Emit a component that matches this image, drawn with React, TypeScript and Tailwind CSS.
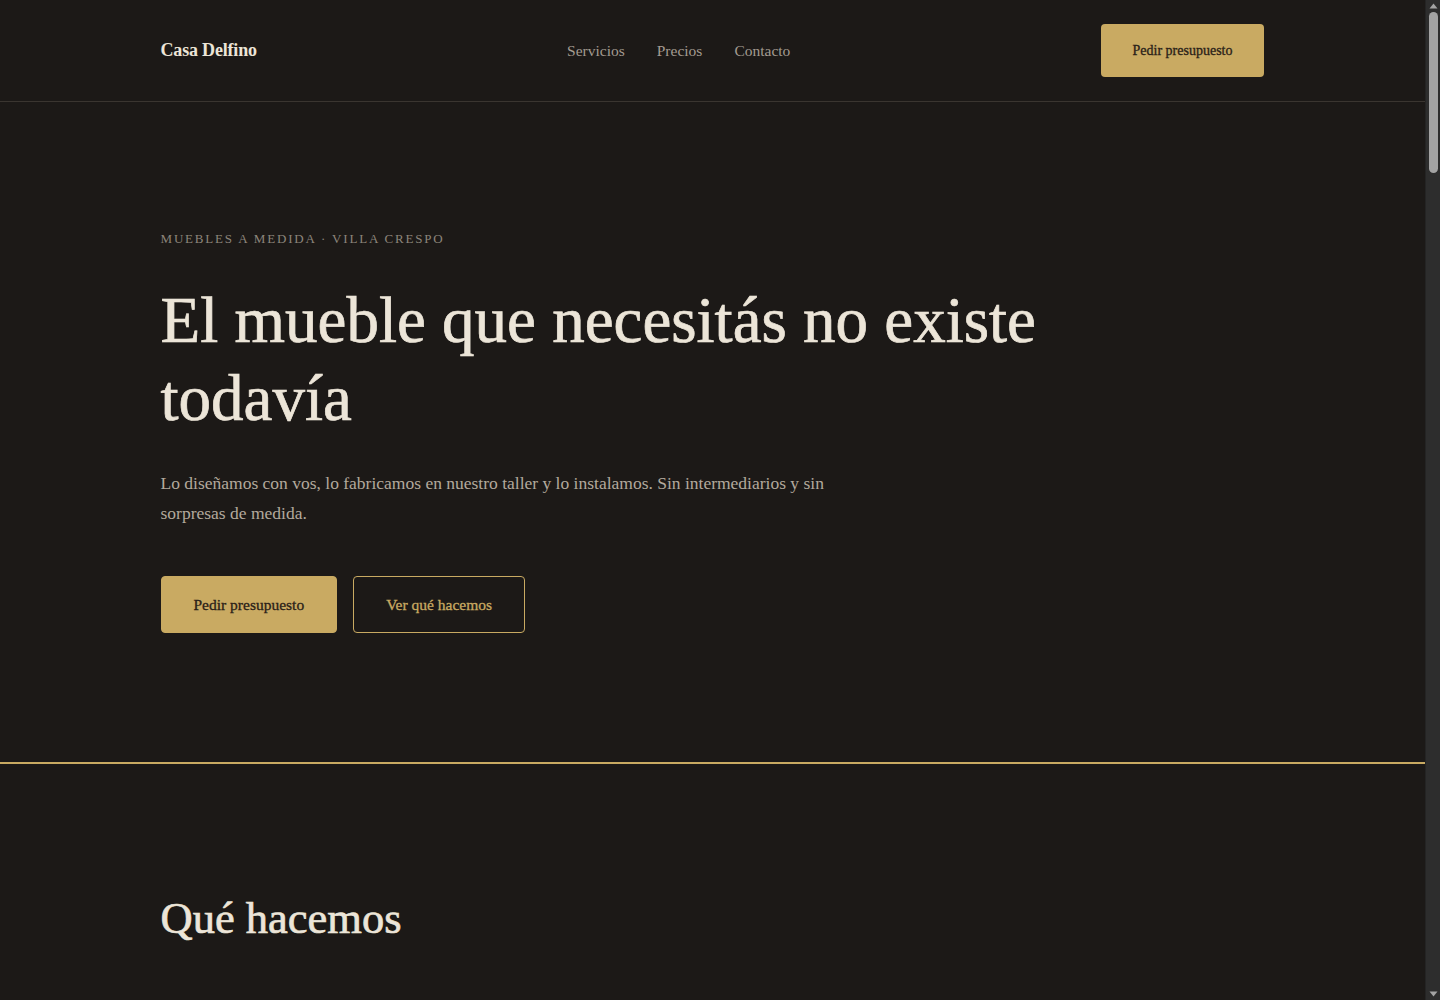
import React from "react";

const serif = "font-['Liberation_Serif','Times_New_Roman',serif]";
const display = "[-webkit-text-stroke:0.7px_#ece5d8]";

const services = [
  { n: "01", t: "Cocinas", d: "Bajo mesadas, alacenas y islas pensadas para tu espacio y tu forma de cocinar." },
  { n: "02", t: "Placares y vestidores", d: "Interiores a medida con cajoneras, barrales y estantes donde realmente los usás." },
  { n: "03", t: "Bibliotecas", d: "Estanterías de piso a techo, con o sin puertas, en madera maciza o enchapada." },
  { n: "04", t: "Muebles de living", d: "Racks, aparadores y mesas bajas que combinan con lo que ya tenés." },
  { n: "05", t: "Espacios de trabajo", d: "Escritorios y estaciones de trabajo para casas, estudios y oficinas chicas." },
  { n: "06", t: "Restauración", d: "Recuperamos muebles de familia: lijado, encolado, lustre y tapizado." },
];

const steps = [
  { n: "1", t: "Visita", d: "Vamos a tu casa, medimos y escuchamos qué necesitás." },
  { n: "2", t: "Diseño", d: "Te mostramos planos y renders con materiales y terminaciones." },
  { n: "3", t: "Fabricación", d: "Lo hacemos en nuestro taller de Villa Crespo, sin tercerizar." },
  { n: "4", t: "Instalación", d: "Lo llevamos, lo instalamos y dejamos todo limpio." },
];

const prices = [
  { t: "Mueble simple", p: "desde $450.000", d: "Estantes, mesas de luz, racks y piezas sueltas.", f: ["Visita y medición", "Un diseño con dos revisiones", "Entrega en 3 semanas"] },
  { t: "Ambiente completo", p: "desde $1.800.000", d: "Cocinas, placares o bibliotecas de pared completa.", f: ["Visita y medición", "Renders del ambiente", "Instalación incluida", "Garantía de 2 años"] },
  { t: "Proyecto a medida", p: "a consultar", d: "Locales, oficinas y obras con varios ambientes.", f: ["Relevamiento técnico", "Coordinación con la obra", "Cronograma por etapas"] },
];

const faqs = [
  { q: "¿Cuánto tarda un mueble?", a: "Entre tres y seis semanas desde que aprobás el diseño, según el tamaño y los materiales." },
  { q: "¿Trabajan fuera de CABA?", a: "Sí, hacemos instalaciones en todo el AMBA. Para otras zonas, consultanos." },
  { q: "¿Qué maderas usan?", a: "Paraíso, guatambú, kiri y petiribí macizos, además de placas enchapadas y melaminas de primera marca." },
  { q: "¿Cómo se paga?", a: "Una seña del 50% al aprobar el diseño y el resto contra entrega e instalación." },
];

function Scrollbar() {
  return (
    <div className="fixed right-0 top-0 z-10 flex h-screen w-[15px] flex-col items-center border-l border-[#242424] bg-[#2d2d2d]">
      <svg width="9" height="6" viewBox="0 0 9 6" className="mt-[3px]">
        <path d="M4.5 0.5 L8.5 5.5 L0.5 5.5 Z" fill="#a3a3a3" />
      </svg>
      <div className="mt-[3px] h-[161px] w-[9px] rounded-full bg-[#a3a3a3]" />
      <div className="flex-1" />
      <svg width="9" height="6" viewBox="0 0 9 6" className="mb-[3px]">
        <path d="M0.5 0.5 L8.5 0.5 L4.5 5.5 Z" fill="#a3a3a3" />
      </svg>
    </div>
  );
}

export default function App() {
  return (
    <div className={`min-h-screen bg-[#1c1917] text-[#ece5d8] ${serif}`}>
      <Scrollbar />
      <div className="mr-[15px]">
        {/* Header */}
        <header className="border-b border-[#3a3530]">
          <div className="mx-auto flex h-[101px] max-w-[1200px] items-center justify-between px-12">
            <a className="text-[18px] font-bold tracking-[-0.01em] text-[#ece5d8]">Casa Delfino</a>
            <nav className="flex items-center gap-8 text-[15.5px] text-[#a39b91]">
              <a>Servicios</a>
              <a>Precios</a>
              <a>Contacto</a>
            </nav>
            <a className="rounded-[4px] bg-[#c9aa62] px-8 py-4 text-[14px] leading-[21px] text-[#2a2118] [-webkit-text-stroke:0.3px_#2a2118]">
              Pedir presupuesto
            </a>
          </div>
        </header>

        {/* Hero */}
        <section>
          <div className="mx-auto max-w-[1200px] px-12 pb-[129px] pt-[127px]">
            <p className="text-[13px] uppercase leading-5 tracking-[0.14em] text-[#8c857b]">
              Muebles a medida · Villa Crespo
            </p>
            <h1 className={`mt-[32px] max-w-[920px] text-[65px] font-normal leading-[78px] text-[#ece5d8] ${display}`}>
              El mueble que necesitás no existe todavía
            </h1>
            <p className="mt-[31px] max-w-[690px] text-[17.5px] leading-[30px] text-[#b3a99d]">
              Lo diseñamos con vos, lo fabricamos en nuestro taller y lo instalamos. Sin intermediarios y sin sorpresas de medida.
            </p>
            <div className="mt-[48px] flex gap-4">
              <a className="rounded-[4px] border border-[#c9aa62] bg-[#c9aa62] px-8 py-4 text-[15.5px] leading-[23px] text-[#2a2118] [-webkit-text-stroke:0.3px_#2a2118]">
                Pedir presupuesto
              </a>
              <a className="rounded-[4px] border border-[#c9aa62] px-8 py-4 text-[15.5px] leading-[23px] text-[#c9aa62] [-webkit-text-stroke:0.3px_#c9aa62]">
                Ver qué hacemos
              </a>
            </div>
          </div>
        </section>

        {/* Qué hacemos */}
        <section className="border-t-2 border-[#c9aa62]">
          <div className="mx-auto max-w-[1200px] px-12 py-32">
            <h2 className={`text-[44.5px] font-normal leading-[1.2] text-[#ece5d8] ${display}`}>Qué hacemos</h2>
            <p className="mt-16 max-w-[620px] text-[17.5px] leading-[30px] text-[#b3a99d]">
              Cada pieza sale de nuestro taller. Trabajamos con madera maciza, placas enchapadas y herrajes de primera.
            </p>
            <div className="mt-16 grid grid-cols-3 gap-6">
              {services.map((s) => (
                <div key={s.n} className="rounded-[4px] border border-[#3a3530] p-8">
                  <span className="text-[13px] tracking-[0.13em] text-[#c9aa62]">{s.n}</span>
                  <h3 className="mt-4 text-[24px] text-[#ece5d8]">{s.t}</h3>
                  <p className="mt-3 text-[16px] leading-[27px] text-[#b3a99d]">{s.d}</p>
                </div>
              ))}
            </div>
          </div>
        </section>

        {/* Cómo trabajamos */}
        <section className="border-t border-[#3a3530]">
          <div className="mx-auto max-w-[1200px] px-12 py-32">
            <p className="text-[13px] uppercase tracking-[0.13em] text-[#8c857b]">El proceso</p>
            <h2 className={`mt-6 text-[44.5px] leading-[1.2] ${display}`}>Cómo trabajamos</h2>
            <div className="mt-16 grid grid-cols-4 gap-10">
              {steps.map((s) => (
                <div key={s.n} className="border-t border-[#c9aa62] pt-6">
                  <span className="text-[40px] text-[#c9aa62]">{s.n}</span>
                  <h3 className="mt-2 text-[22px]">{s.t}</h3>
                  <p className="mt-3 text-[16px] leading-[27px] text-[#b3a99d]">{s.d}</p>
                </div>
              ))}
            </div>
          </div>
        </section>

        {/* Trabajos */}
        <section className="border-t border-[#3a3530]">
          <div className="mx-auto max-w-[1200px] px-12 py-32">
            <h2 className={`text-[44.5px] leading-[1.2] ${display}`}>Trabajos recientes</h2>
            <div className="mt-16 grid grid-cols-2 gap-6">
              {["Cocina en paraíso · Palermo", "Biblioteca de pared · Almagro", "Vestidor · Caballito", "Rack y aparador · Villa Crespo"].map((t) => (
                <div key={t}>
                  <div className="h-[320px] rounded-[4px] bg-gradient-to-br from-[#3a3128] to-[#26211c]" />
                  <p className="mt-4 text-[17px] text-[#b3a99d]">{t}</p>
                </div>
              ))}
            </div>
          </div>
        </section>

        {/* Precios */}
        <section className="border-t border-[#3a3530]">
          <div className="mx-auto max-w-[1200px] px-12 py-32">
            <h2 className={`text-[44.5px] leading-[1.2] ${display}`}>Precios</h2>
            <p className="mt-6 max-w-[620px] text-[17.5px] leading-[30px] text-[#b3a99d]">
              Valores orientativos. El presupuesto final depende de medidas, materiales y terminaciones.
            </p>
            <div className="mt-16 grid grid-cols-3 gap-6">
              {prices.map((p, i) => (
                <div key={p.t} className={`rounded-[4px] border p-10 ${i === 1 ? "border-[#c9aa62]" : "border-[#3a3530]"}`}>
                  <h3 className="text-[24px]">{p.t}</h3>
                  <p className="mt-4 text-[30px] text-[#c9aa62]">{p.p}</p>
                  <p className="mt-4 text-[16px] leading-[27px] text-[#b3a99d]">{p.d}</p>
                  <ul className="mt-6 space-y-3 text-[16px] text-[#b3a99d]">
                    {p.f.map((f) => (
                      <li key={f} className="border-t border-[#3a3530] pt-3">{f}</li>
                    ))}
                  </ul>
                </div>
              ))}
            </div>
          </div>
        </section>

        {/* Testimonios */}
        <section className="border-t border-[#3a3530]">
          <div className="mx-auto max-w-[1200px] px-12 py-32">
            <h2 className={`text-[44.5px] leading-[1.2] ${display}`}>Lo que dicen</h2>
            <div className="mt-16 grid grid-cols-2 gap-10">
              <blockquote className="border-l-2 border-[#c9aa62] pl-8 text-[22px] leading-[34px]">
                “Nos hicieron la cocina entera en cinco semanas. Quedó exactamente como en los renders.”
                <footer className="mt-4 text-[15px] text-[#8c857b]">Laura M. · Palermo</footer>
              </blockquote>
              <blockquote className="border-l-2 border-[#c9aa62] pl-8 text-[22px] leading-[34px]">
                “Restauraron el aparador de mi abuela. Parece nuevo pero sigue siendo el mismo mueble.”
                <footer className="mt-4 text-[15px] text-[#8c857b]">Jorge R. · Caballito</footer>
              </blockquote>
            </div>
          </div>
        </section>

        {/* FAQ */}
        <section className="border-t border-[#3a3530]">
          <div className="mx-auto max-w-[1200px] px-12 py-32">
            <h2 className={`text-[44.5px] leading-[1.2] ${display}`}>Preguntas frecuentes</h2>
            <div className="mt-12 max-w-[800px]">
              {faqs.map((f) => (
                <div key={f.q} className="border-b border-[#3a3530] py-6">
                  <h3 className="text-[20px]">{f.q}</h3>
                  <p className="mt-2 text-[16px] leading-[27px] text-[#b3a99d]">{f.a}</p>
                </div>
              ))}
            </div>
          </div>
        </section>

        {/* Contacto */}
        <section className="border-t-2 border-[#c9aa62]">
          <div className="mx-auto grid max-w-[1200px] grid-cols-2 gap-16 px-12 py-32">
            <div>
              <h2 className={`text-[44.5px] leading-[1.2] ${display}`}>Contacto</h2>
              <p className="mt-6 text-[17.5px] leading-[30px] text-[#b3a99d]">
                Contanos qué necesitás y te respondemos en 48 horas hábiles.
              </p>
              <div className="mt-10 space-y-2 text-[16px] text-[#b3a99d]">
                <p>Av. Corrientes 5400, Villa Crespo, CABA</p>
                <p>hola@casadelfino.com.ar</p>
                <p>+54 11 4855-2210</p>
              </div>
            </div>
            <form className="space-y-5">
              {["Nombre", "Email", "Teléfono"].map((l) => (
                <label key={l} className="block">
                  <span className="text-[14px] text-[#8c857b]">{l}</span>
                  <div className="mt-2 h-12 rounded-[4px] border border-[#3a3530]" />
                </label>
              ))}
              <label className="block">
                <span className="text-[14px] text-[#8c857b]">Qué necesitás</span>
                <div className="mt-2 h-32 rounded-[4px] border border-[#3a3530]" />
              </label>
              <button type="button" className="rounded-[4px] bg-[#c9aa62] px-8 py-4 text-[15.5px] text-[#2a2118]">
                Enviar consulta
              </button>
            </form>
          </div>
        </section>

        <footer className="border-t border-[#3a3530]">
          <div className="mx-auto flex max-w-[1200px] items-center justify-between px-12 py-10 text-[14px] text-[#8c857b]">
            <span className="text-[17px] font-bold text-[#ece5d8]">Casa Delfino</span>
            <span>© 2025 Casa Delfino · Muebles a medida</span>
          </div>
        </footer>
      </div>
    </div>
  );
}
